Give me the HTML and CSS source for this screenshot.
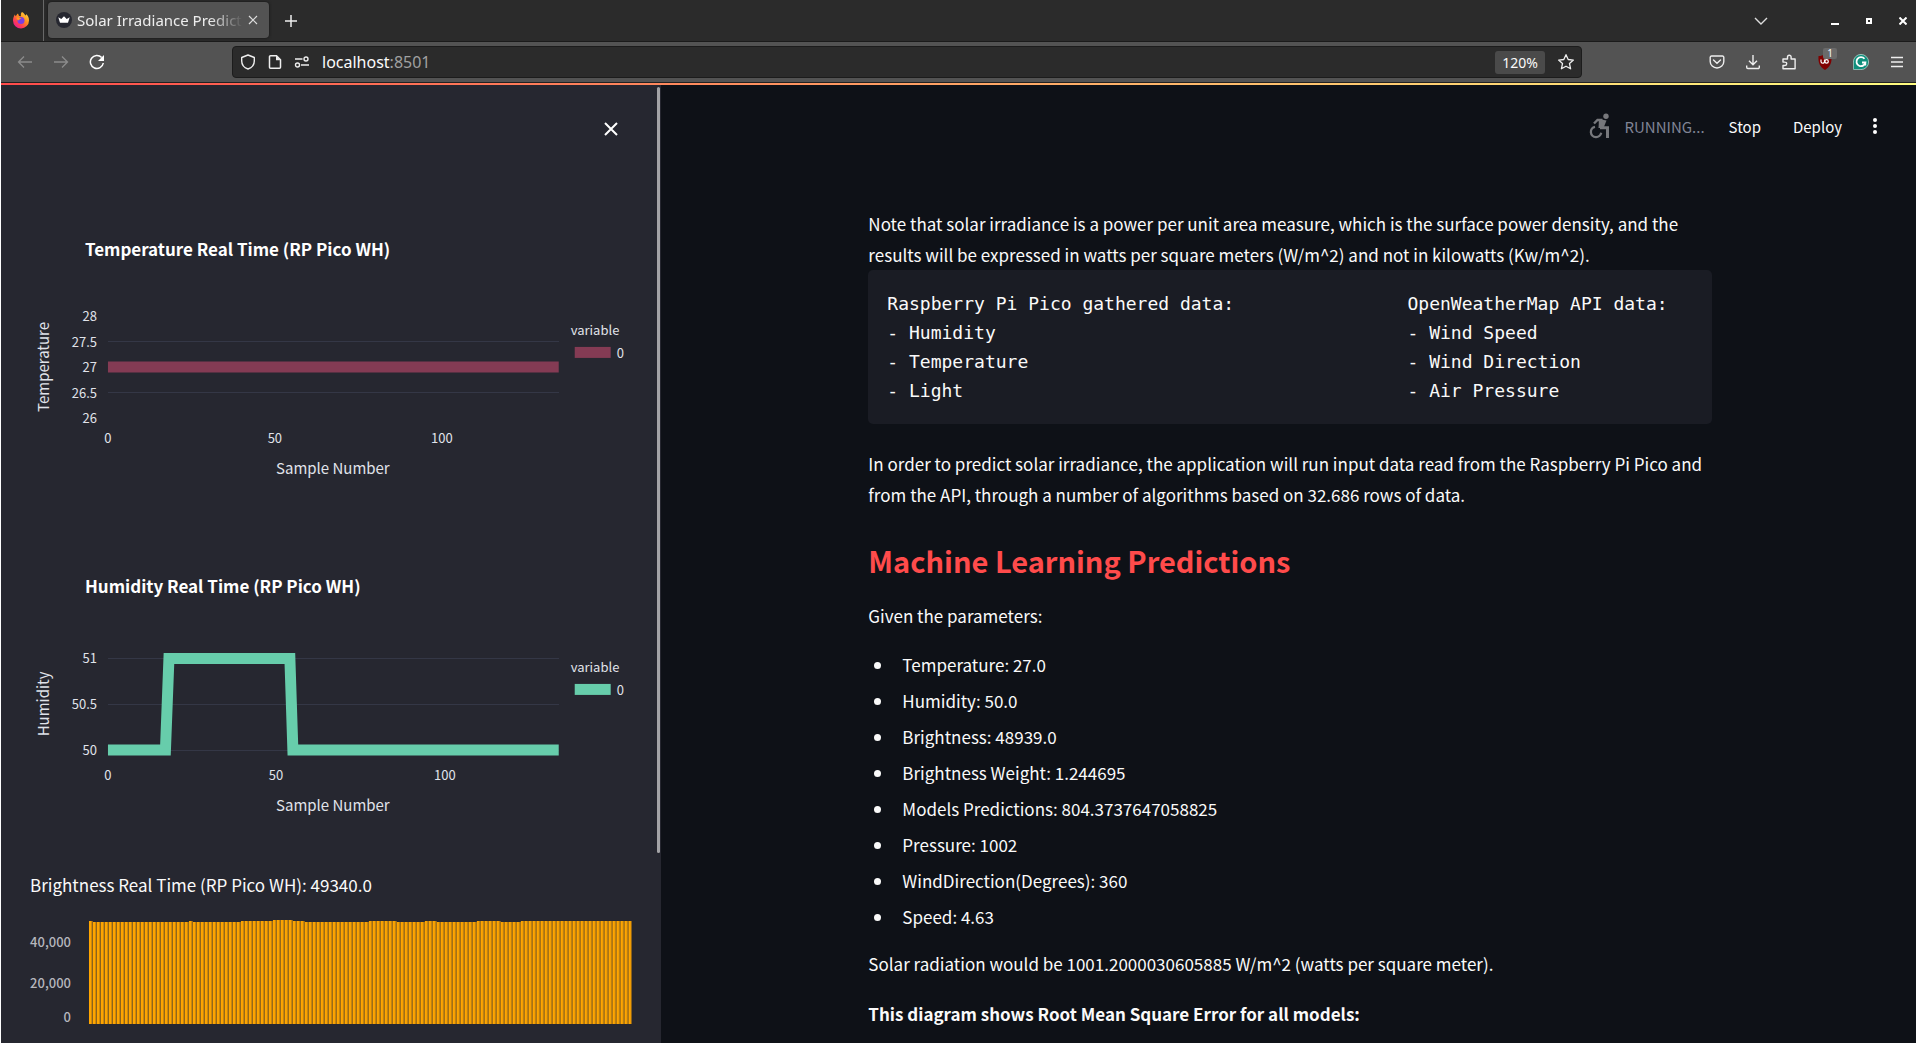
FILE: index.html
```html
<!DOCTYPE html>
<html lang="en">
<head>
<meta charset="utf-8">
<title>Solar Irradiance Prediction</title>
<link rel="stylesheet" href="styles.css">
</head>
<body>
<div class="window">
  <header class="browser">
    <div class="tabs">
      <button class="firefox" aria-label="Firefox View">
        <svg width="18" height="18" viewBox="0 0 18 18"><defs><linearGradient id="fx" x1="1" y1="0" x2="0.2" y2="1"><stop offset="0" stop-color="#ffe84a"/><stop offset="0.45" stop-color="#ff9020"/><stop offset="0.75" stop-color="#ff3c54"/><stop offset="1" stop-color="#e3189c"/></linearGradient></defs><path d="M10 1c2 1 2.600 2.500 3.600 3.600 .6-.3.5-1 .4-1.500 2 1.500 3 4 3 6.300A8 8 0 0 1 1 9.500C1 7.500 1.700 5.500 2.800 3.500l.9 1.700C4.500 4.300 5 3.200 6 2.500l1 2.500 2 .2C8.500 3.500 9 2 10 1z" fill="url(#fx)"/><circle cx="9" cy="9.500" r="3.500" fill="#7b3fe4"/><path d="M4.500 6.500c2-.8 3 .5 5 .5-1 1.500-2.500 1.200-3 2.500-1-.5-2-1.700-2-3z" fill="#ff9a1f"/></svg>
      </button>
      <div class="tab">
        <svg width="16" height="16" viewBox="0 0 16 16"><circle cx="8" cy="8" r="8" fill="#262730"/><path d="M2.300 5.200l3 1.900L8 4.300l2.700 2.800 3-1.900-1.700 5.600H4z" fill="#fff"/></svg>
        <span class="tab-title">Solar Irradiance Predict</span>
        <button aria-label="Close tab"><svg width="10" height="10" viewBox="0 0 10 10"><path d="M1 1l8 8M9 1l-8 8" stroke="#ddd" stroke-width="1.200"/></svg></button>
      </div>
      <button class="new-tab" aria-label="New tab"><svg width="14" height="14" viewBox="0 0 14 14"><path d="M7 1v12M1 7h12" stroke="#eee" stroke-width="1.500"/></svg></button>
      <div class="window-buttons">
        <button aria-label="List all tabs"><svg width="14" height="8" viewBox="0 0 14 8"><path d="M1 1l6 6 6-6" fill="none" stroke="#ddd" stroke-width="1.400"/></svg></button>
        <button aria-label="Minimize"><svg width="8" height="8" viewBox="0 0 8 8"><path d="M0 6h8v2H0z" fill="#fff"/></svg></button>
        <button aria-label="Maximize"><svg width="6" height="6" viewBox="0 0 6 6"><path d="M1 1h4v4H1z" fill="none" stroke="#fff" stroke-width="2"/></svg></button>
        <button aria-label="Close window"><svg width="8" height="8" viewBox="0 0 8 8"><path d="M.5.5l7 7M7.500.5l-7 7" stroke="#fff" stroke-width="2"/></svg></button>
      </div>
    </div>
    <div class="toolbar">
      <div class="nav">
        <button aria-label="Back"><svg width="16" height="16" viewBox="0 0 16 16" fill="none" stroke="#8c8c8c" stroke-width="1.300"><path d="M15 8H1.500M7 2.500L1.500 8 7 13.500"/></svg></button>
        <button aria-label="Forward"><svg width="16" height="16" viewBox="0 0 16 16" fill="none" stroke="#8c8c8c" stroke-width="1.300"><path d="M1 8h13.500M9 2.500L14.500 8 9 13.500"/></svg></button>
        <button aria-label="Reload"><svg width="16" height="16" viewBox="0 0 16 16"><path d="M14.300 9A6.500 6.500 0 1 1 12.700 3.600" fill="none" stroke="#fff" stroke-width="1.500"/><path d="M15 1v6H9z" fill="#fff"/></svg></button>
      </div>
      <div class="urlbar">
        <svg width="16" height="16" viewBox="0 0 16 16"><path d="M8 1l6.300 2.500V7c0 4-2.800 6.800-6.300 8C4.500 13.800 1.700 11 1.700 7V3.500z" fill="none" stroke="#eee" stroke-width="1.400" stroke-linejoin="round"/></svg>
        <svg width="14" height="16" viewBox="0 0 14 16"><path d="M2.500 1.700h6l4 4v7.600a1 1 0 0 1-1 1h-9a1 1 0 0 1-1-1V2.700a1 1 0 0 1 1-1z" fill="none" stroke="#eee" stroke-width="1.500"/><path d="M8 1.500v4.700h4.700z" fill="#eee"/></svg>
        <svg width="16" height="12" viewBox="0 0 16 12" fill="none" stroke="#eee" stroke-width="1.400"><path d="M1 3h7.500M7 9h8"/><circle cx="12" cy="3" r="2"/><circle cx="3.500" cy="9" r="2"/></svg>
        <span class="url"><span class="host">localhost</span>:8501</span>
        <button class="zoom">120%</button>
        <button aria-label="Bookmark"><svg width="18" height="18" viewBox="0 0 18 18"><path d="M9 1.700l2.200 4.800 5.200.6-3.900 3.500 1.100 5.200L9 13.200l-4.600 2.600 1.100-5.200L1.600 7.100l5.200-.6z" fill="none" stroke="#eee" stroke-width="1.300" stroke-linejoin="round"/></svg></button>
      </div>
      <div class="extensions">
        <button aria-label="Pocket"><svg width="16" height="16" viewBox="0 0 16 16" fill="none" stroke="#eee" stroke-width="1.400"><path d="M2.500 2h11A1.300 1.300 0 0 1 14.800 3.300V7.500a6.800 6.500 0 0 1-13.600 0V3.300A1.300 1.300 0 0 1 2.500 2z"/><path d="M4.500 6L8 9.300 11.500 6" stroke-linecap="round"/></svg></button>
        <button aria-label="Downloads"><svg width="16" height="16" viewBox="0 0 16 16" fill="none" stroke="#eee" stroke-width="1.400"><path d="M8 1v9.500M4 6.800l4 4 4-4M1.700 11.500v1.800a1.200 1.200 0 0 0 1.200 1.200h10.200a1.200 1.200 0 0 0 1.200-1.200v-1.800"/></svg></button>
        <button aria-label="Extensions"><svg width="16" height="16" viewBox="0 0 16 16" fill="none" stroke="#eee" stroke-width="1.400" stroke-linejoin="round"><path d="M2 8V5h4.500V3a1.800 1.800 0 0 1 3.600 0v2h4v9.800H2v-3.300h2a1.700 1.700 0 0 0 0-3.400z"/></svg></button>
        <button class="ublock" aria-label="uBlock"><svg width="16" height="16" viewBox="0 0 16 16"><path d="M8 0c2 1.500 4 2 6.500 2C15 9 13 13 8 16 3 13 1 9 1.500 2 4 2 6 1.500 8 0z" fill="#800000"/><path d="M4 5.500v2a1.500 1.500 0 0 0 3.500 0V5.500" fill="none" stroke="#fff" stroke-width="1.200"/><circle cx="9.600" cy="7.400" r="1.700" fill="none" stroke="#fff" stroke-width="1.200"/></svg><span class="badge">1</span></button>
        <button aria-label="Grammarly"><svg width="16" height="16" viewBox="0 0 16 16"><path d="M8 .4a7.600 7.600 0 1 1 0 15.200H1a.6.6 0 0 1-.6-.6V8A7.600 7.600 0 0 1 8 .4z" fill="#0f8f7c" stroke="#a9d3cc" stroke-width=".8"/><path d="M11.500 4.800A4.500 4.500 0 1 0 12.400 8.500H9M12.300 8.500v3" fill="none" stroke="#fff" stroke-width="1.800"/></svg></button>
        <button class="menu" aria-label="Menu"><svg width="12" height="12" viewBox="0 0 12 12"><path d="M0 1.500h12M0 6h12M0 10.500h12" stroke="#eee" stroke-width="1.300"/></svg></button>
      </div>
    </div>
  </header>
  <div class="app">
    <aside class="sidebar">
      <button class="close" aria-label="Close sidebar"><svg width="14" height="14" viewBox="0 0 14 14"><path d="M1 1l12 12M13 1L1 13" stroke="#fff" stroke-width="2"/></svg></button>
      <svg class="chart" viewBox="0 0 602 337">
        <text class="chart-title" x="55" y="56">Temperature Real Time (RP Pico WH)</text>
        <path class="grid" d="M78 141.500h451M78 192.500h451"/>
        <path d="M78 167h451" stroke="#843b54" stroke-width="11"/>
        <g class="tick end"><text x="67" y="121">28</text><text x="67" y="147">27.5</text><text x="67" y="172">27</text><text x="67" y="198">26.5</text><text x="67" y="223">26</text></g>
        <g class="tick mid"><text x="78" y="243">0</text><text x="245" y="243">50</text><text x="412" y="243">100</text></g>
        <text class="axis" x="303" y="274">Sample Number</text>
        <text class="axis" transform="translate(19 167) rotate(-90)">Temperature</text>
        <text class="legend" x="541" y="135">variable</text>
        <rect x="545" y="147" width="36" height="11" fill="#843b54"/>
        <text class="legend" x="587" y="158">0</text>
      </svg>
      <svg class="chart" viewBox="0 0 602 321">
        <text class="chart-title" x="55" y="56">Humidity Real Time (RP Pico WH)</text>
        <path class="grid" d="M78 121.500h451M78 167.500h451M78 213.500h451"/>
        <path d="M78 213h57.500L139 121.500h121L263 213h266" fill="none" stroke="#67cdab" stroke-width="11"/>
        <g class="tick end"><text x="67" y="126">51</text><text x="67" y="172">50.5</text><text x="67" y="218">50</text></g>
        <g class="tick mid"><text x="78" y="243">0</text><text x="246" y="243">50</text><text x="415" y="243">100</text></g>
        <text class="axis" x="303" y="274">Sample Number</text>
        <text class="axis" transform="translate(19 167) rotate(-90)">Humidity</text>
        <text class="legend" x="541" y="135">variable</text>
        <rect x="545" y="147" width="36" height="11" fill="#67cdab"/>
        <text class="legend" x="587" y="158">0</text>
      </svg>
      <p class="brightness">Brightness Real Time (RP Pico WH): 49340.0</p>
      <svg class="chart" viewBox="0 0 602 112">
        <defs><pattern id="bars" x="59" width="4" height="112" patternUnits="userSpaceOnUse"><path d="M0 0h2v112H0z" fill="#ffa500"/><path d="M2 0h1v112H2z" fill="#cf8a0c"/><path d="M3 0h1v112H3z" fill="#8a621c"/></pattern></defs>
        <path d="M59 10h4v1h96v-1h4v1h48v-1h32v-1h20v1h12v1h64v-1h28v1h28v-1h12v1h40v-1h24v1h20v-1h111v103H59z" fill="url(#bars)"/>
        <g class="bar-label"><text x="41" y="36">40,000</text><text x="41" y="77">20,000</text><text x="41" y="111">0</text></g>
      </svg>
      <span class="scrollbar"></span>
    </aside>
    <main class="main">
      <div class="status">
        <svg width="22" height="26" viewBox="0 0 22 26" fill="none" stroke="#77787c"><circle cx="17" cy="3.200" r="2.700" fill="#77787c" stroke="none"/><path d="M5 10.500L8.500 7H13.500" stroke-width="2.400"/><path d="M10 6l7.500 1.500L14.500 15h-5z" fill="#77787c" stroke="none"/><path d="M11 14.700h7.500V25" stroke-width="3"/><path d="M6 13.800a5.200 5.200 0 1 0 6.200 6" stroke-width="2.300"/></svg>
        <span class="running">RUNNING...</span>
        <button class="stop">Stop</button>
        <button>Deploy</button>
        <button class="kebab" aria-label="Menu"><svg width="4" height="16" viewBox="0 0 4 16" fill="#fff"><circle cx="2" cy="2" r="2"/><circle cx="2" cy="8" r="2"/><circle cx="2" cy="14" r="2"/></svg></button>
      </div>
      <article class="content">
        <p>Note that solar irradiance is a power per unit area measure, which is the surface power density, and the results will be expressed in watts per square meters (W/m^2) and not in kilowatts (Kw/m^2).</p>
        <pre>Raspberry Pi Pico gathered data:                OpenWeatherMap API data:
- Humidity                                      - Wind Speed
- Temperature                                   - Wind Direction
- Light                                         - Air Pressure</pre>
        <p>In order to predict solar irradiance, the application will run input data read from the Raspberry Pi Pico and from the API, through a number of algorithms based on 32.686 rows of data.</p>
        <h2>Machine Learning Predictions</h2>
        <p>Given the parameters:</p>
        <ul>
          <li>Temperature: 27.0</li>
          <li>Humidity: 50.0</li>
          <li>Brightness: 48939.0</li>
          <li>Brightness Weight: 1.244695</li>
          <li>Models Predictions: 804.3737647058825</li>
          <li>Pressure: 1002</li>
          <li>WindDirection(Degrees): 360</li>
          <li>Speed: 4.63</li>
        </ul>
        <p>Solar radiation would be 1001.2000030605885 W/m^2 (watts per square meter).</p>
        <p class="strong">This diagram shows Root Mean Square Error for all models:</p>
      </article>
    </main>
  </div>
</div>
</body>
</html>
```
FILE: styles.css
```css
* { box-sizing: border-box; }
body { margin: 0; background: #0e1117; color: #fafafa; font: 17px/31px "Noto Sans CJK SC", sans-serif; }
button { display: flex; align-items: center; padding: 0; border: 0; background: none; color: inherit; font: inherit; }
svg { display: block; flex: none; }
.window { height: 100vh; display: flex; flex-direction: column; overflow: hidden; border-left: 1px solid #fff; }

.browser { flex: none; font-family: "Noto Sans", sans-serif; }
.tabs { height: 42px; display: flex; align-items: center; background: #2b2b2b; border-bottom: 1px solid #1b1b1b; }
.firefox { width: 43px; height: 41px; padding-left: 11px; padding-bottom: 2px; border-right: 1px solid #686868; }
.tab { width: 221px; height: 36px; margin-left: 4px; margin-bottom: 1px; padding: 0 11px 0 8px; display: flex; align-items: center; gap: 5px; background: #535353; border-radius: 4px; box-shadow: 0 0 3px #111; }
.tab-title { flex: 1; white-space: nowrap; font-size: 15px; color: #eee; -webkit-mask-image: linear-gradient(90deg, #000 80%, transparent); mask-image: linear-gradient(90deg, #000 80%, transparent); }
.new-tab { margin-left: 15px; }
.window-buttons { margin-left: auto; margin-right: 9px; display: flex; align-items: center; gap: 27px; }
.window-buttons button:first-child { margin-right: 36px; }
.toolbar { height: 41px; display: flex; align-items: center; background: #535353; border-bottom: 1px solid #222; }
.nav { width: 231px; padding-left: 16px; display: flex; gap: 20px; }
.urlbar { flex: 0 1 1350px; height: 32px; padding: 0 6px 0 7px; display: flex; align-items: center; gap: 12px; background: #2b2b2b; border: 1px solid #1c1c1c; border-radius: 4px; }
.url { flex: 1; font-size: 16px; color: #a0a0a0; }
.host { color: #fbfbfb; }
.zoom { height: 23px; padding: 0 7px; background: #4a4a4a; border-radius: 3px; font-size: 14px; }
.extensions { margin-left: auto; padding-right: 13px; display: flex; align-items: center; gap: 20px; }
.menu { margin-left: 2px; }
.ublock { position: relative; }
.badge { position: absolute; left: 6px; top: -6px; width: 14px; height: 11px; background: #6a6a6a; border-radius: 2px; font-size: 10px; line-height: 11px; }

.app { flex: 1; min-height: 0; display: flex; border-top: 2px solid; border-image: linear-gradient(90deg, #ff4b4b, #fffd80) 1; }
.sidebar { position: relative; flex: 0 0 34.45%; padding: 0 29px; background: #262730; overflow: hidden; }
.close { height: 88px; margin: 0 14px 27px auto; }
.chart { width: 100%; overflow: visible; }
.chart text { fill: #e0e3ea; }
.chart .chart-title { fill: #fff; font-size: 17px; font-weight: 700; }
.grid { stroke: #343746; stroke-width: 1; shape-rendering: crispEdges; }
.tick, .legend { font-size: 13px; }
.end { text-anchor: end; }
.mid, .axis { text-anchor: middle; }
.axis { font-size: 15px; }
.brightness { margin: 11px 0; }
.bar-label { font-size: 13px; font-weight: 500; text-anchor: end; }
.chart .bar-label text { fill: #b5b6bd; }
.scrollbar { position: absolute; top: 2px; right: 1px; width: 3px; height: 80%; background: #a3a3a6; border-radius: 2px; }

.main { flex: 1; min-width: 0; overflow: hidden; }
.status { height: 123px; padding: 0 39px 41px; display: flex; align-items: center; justify-content: flex-end; font-size: 15px; }
.running { margin-left: 13px; color: #808495; }
.stop { margin: 0 32px 0 24px; }
.kebab { margin-left: 31px; }
.content { max-width: 848px; margin: 0 auto; padding-left: 4px; }
.content p { margin: 0; }
pre { margin: 0 0 24px; padding: 19px; background: #1a1c24; border-radius: 5px; font: 18px/29px "DejaVu Sans Mono", monospace; }
h2 { margin: 0; padding: 26px 0 16px; color: #ff4b4b; font-size: 29px; line-height: 48px; font-weight: 600; }
ul { margin: 16px 0 13px; padding-left: 6px; list-style: none; }
li { display: flex; align-items: center; gap: 21px; line-height: 36px; }
li::before { content: ""; width: 7px; height: 7px; border-radius: 50%; background: #fafafa; }
.strong { padding-top: 19px; font-weight: 700; }
```
